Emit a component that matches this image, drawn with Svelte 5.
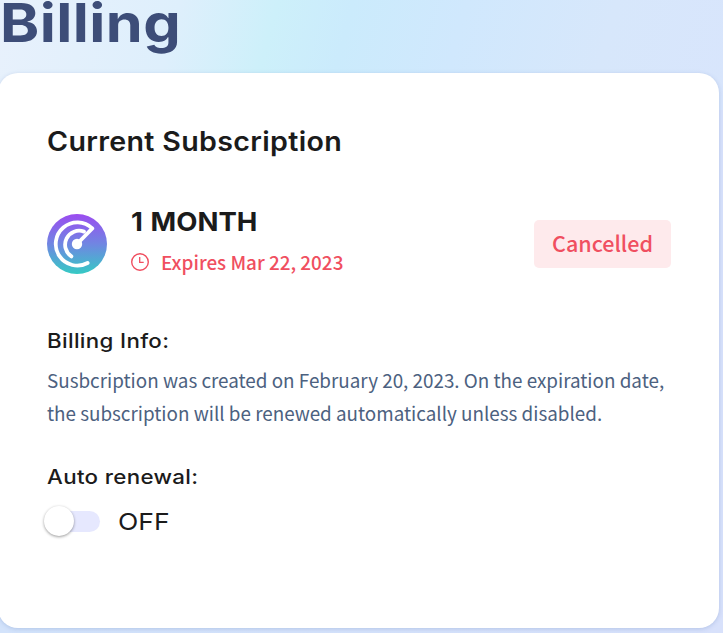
<script>
    let subscription = {
        plan: "1 MONTH",
        expires: "Mar 22, 2023",
        created: "February 20, 2023",
        status: "Cancelled",
    };

    let autoRenewal = $state(false);

    function toggleRenewal() {
        autoRenewal = !autoRenewal;
    }
</script>

<main class="page">
    <h1>Billing</h1>

    <section class="card">
        <h2>Current Subscription</h2>

        <div class="plan">
            <svg class="logo" viewBox="0 0 60 60" fill="none">
                <defs>
                    <linearGradient id="logoFill" x1="0" y1="0" x2="0" y2="1">
                        <stop offset="0" stop-color="#9b4cf0" />
                        <stop offset="0.5" stop-color="#7086e2" />
                        <stop offset="1" stop-color="#35cac4" />
                    </linearGradient>
                </defs>
                <circle cx="30" cy="30" r="30" fill="url(#logoFill)" />
                <g stroke="#fff" stroke-width="3.8" stroke-linecap="round" stroke-linejoin="round">
                    <path d="M30 30 45.3 14.4A21.6 21.6 0 1 0 40.6 49" />
                    <path d="M37 17.6A14 14 0 0 0 24.4 42.4" />
                </g>
                <circle cx="30" cy="30" r="5.2" fill="#fff" />
            </svg>
            <div class="details">
                <h3>{subscription.plan}</h3>
                <p class="expires">
                    <svg class="clock" viewBox="0 0 18 18" fill="none" stroke="currentColor">
                        <circle cx="9" cy="9" r="8.3" stroke-width="1.4" />
                        <path d="M8.7 4v5.3h4" stroke-width="1.3" />
                    </svg>
                    <span>Expires {subscription.expires}</span>
                </p>
            </div>
            <span class="status">{subscription.status}</span>
        </div>

        <h4>Billing Info:</h4>
        <p class="info">
            Susbcription was created on {subscription.created}. On the expiration date,<br />
            the subscription will be renewed automatically unless disabled.
        </p>

        <h4 class="renewal">Auto renewal:</h4>
        <div class="toggle">
            <button
                class="switch"
                class:on={autoRenewal}
                role="switch"
                aria-checked={autoRenewal}
                aria-label="Auto renewal"
                onclick={toggleRenewal}
            >
                <span class="knob"></span>
            </button>
            <span class="state">{autoRenewal ? "ON" : "OFF"}</span>
        </div>
    </section>
</main>

<style>
    :global(body) {
        margin: 0;
    }

    .page {
        box-sizing: border-box;
        height: 633px;
        font-family: Inter, "Liberation Sans", sans-serif;
        color: #1b1b1b;
        background:
            linear-gradient(105deg, #e8f1fc 0, #deeffc 24%, #cdf0fa 37%, #cbebfc 47%, #d0e8fd 62%, #d7e7fb 82%, #d8e5fc 100%) top / 100% 110px no-repeat,
            linear-gradient(90deg, #d3e3fb, #d8e1fb);
    }

    h1,
    h2,
    h3,
    h4,
    p {
        margin: 0;
    }

    h1,
    h2,
    h3,
    h4,
    .state {
        width: fit-content;
        transform-origin: left;
    }

    h1 {
        height: 73px;
        line-height: 46px;
        font-size: 53px;
        font-weight: 700;
        letter-spacing: 0.4px;
        transform: scaleX(1.12);
        color: #3d4d78;
    }

    .card {
        box-sizing: border-box;
        width: 721px;
        height: 555px;
        margin-left: -2px;
        padding: 51px 48px 0 49px;
        border-radius: 20px;
        background: #fff;
        box-shadow: 0 1px 4px rgba(100, 130, 190, 0.3);
    }

    h2 {
        line-height: 34px;
        font-size: 26.5px;
        font-weight: 600;
        letter-spacing: 0.3px;
        transform: scaleX(1.08);
    }

    .plan {
        display: flex;
        align-items: center;
        height: 74px;
        margin-top: 49px;
    }

    .logo {
        width: 60px;
        height: 60px;
        margin-top: -1px;
    }

    .details {
        margin-left: 24px;
    }

    h3 {
        line-height: 36px;
        font-size: 26px;
        font-weight: 700;
        word-spacing: 1px;
        transform: scaleX(1.06);
    }

    .expires {
        display: flex;
        align-items: center;
        gap: 12px;
        height: 44px;
        font-family: "Noto Sans CJK SC", sans-serif;
        font-size: 18.9px;
        font-weight: 500;
        line-height: 26px;
        color: #f04f60;
    }

    .expires span {
        padding-bottom: 1px;
    }

    .clock {
        width: 18px;
        height: 18px;
    }

    .status {
        width: 137px;
        height: 48px;
        margin-left: auto;
        border-radius: 5px;
        background: #feeaec;
        font-family: "Noto Sans CJK SC", sans-serif;
        font-size: 21.5px;
        font-weight: 500;
        line-height: 46px;
        text-align: center;
        color: #f04f60;
    }

    h4 {
        margin-top: 46px;
        line-height: 28px;
        font-size: 20px;
        font-weight: 500;
        letter-spacing: 0.3px;
        transform: scaleX(1.115);
    }

    .info {
        margin-top: 8px;
        font-family: "Noto Sans CJK SC", sans-serif;
        font-size: 18.83px;
        line-height: 33px;
        white-space: nowrap;
        color: #4c6180;
    }

    h4.renewal {
        margin-top: 34px;
    }

    .toggle {
        display: flex;
        align-items: center;
        gap: 18px;
        height: 32px;
        margin-top: 14px;
    }

    .switch {
        display: flex;
        align-items: center;
        width: 53px;
        height: 21px;
        padding: 0;
        border: 0;
        border-radius: 11px;
        background: #e6e8fe;
    }

    .switch.on {
        justify-content: flex-end;
        background: #7086e2;
    }

    .knob {
        flex: none;
        width: 30px;
        height: 30px;
        margin-left: -3px;
        border-radius: 50%;
        background: #fff;
        box-shadow: 0 1px 3px rgba(0, 0, 0, 0.4);
    }

    .state {
        font-size: 23.5px;
        transform: scaleX(1.13);
    }
</style>
